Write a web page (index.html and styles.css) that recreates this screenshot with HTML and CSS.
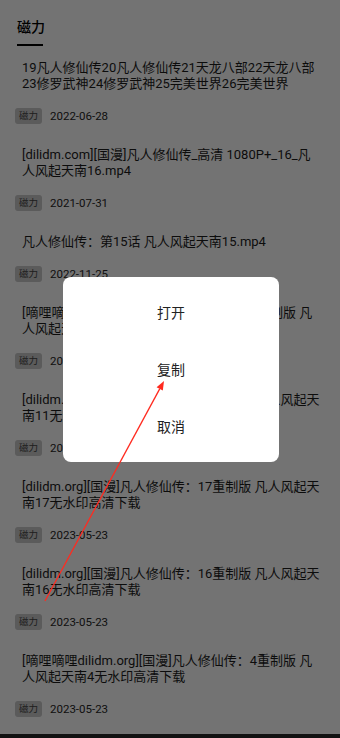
FILE: index.html
```html
<!DOCTYPE html>
<html lang="zh-CN">
<head>
<meta charset="utf-8">
<title>磁力</title>
<link rel="stylesheet" href="styles.css">
</head>
<body>
<div class="page">
  <header class="tabs">
    <div class="tab active">磁力</div>
  </header>
  <ul class="list">
    <li class="item">
      <p class="name">19凡人修仙传20凡人修仙传21天龙八部22天龙八部23修罗武神24修罗武神25完美世界26完美世界</p>
      <div class="meta"><span class="tag">磁力</span><span class="date">2022-06-28</span></div>
    </li>
    <li class="item">
      <p class="name">[dilidm.com][国漫]凡人修仙传_高清 1080P+_16_凡人风起天南16.mp4</p>
      <div class="meta"><span class="tag">磁力</span><span class="date">2021-07-31</span></div>
    </li>
    <li class="item">
      <p class="name">凡人修仙传：第15话 凡人风起天南15.mp4</p>
      <div class="meta"><span class="tag">磁力</span><span class="date">2022-11-25</span></div>
    </li>
    <li class="item">
      <p class="name">[嘀哩嘀哩dilidm.org][国漫]凡人修仙传：5重制版 凡人风起天南5无水印高清下载</p>
      <div class="meta"><span class="tag">磁力</span><span class="date">2023-05-23</span></div>
    </li>
    <li class="item">
      <p class="name">[dilidm.org][国漫]凡人修仙传：11重制版 凡人风起天南11无水印高清下载</p>
      <div class="meta"><span class="tag">磁力</span><span class="date">2023-05-23</span></div>
    </li>
    <li class="item">
      <p class="name">[dilidm.org][国漫]凡人修仙传：17重制版 凡人风起天南17无水印高清下载</p>
      <div class="meta"><span class="tag">磁力</span><span class="date">2023-05-23</span></div>
    </li>
    <li class="item">
      <p class="name">[dilidm.org][国漫]凡人修仙传：16重制版 凡人风起天南16无水印高清下载</p>
      <div class="meta"><span class="tag">磁力</span><span class="date">2023-05-23</span></div>
    </li>
    <li class="item">
      <p class="name">[嘀哩嘀哩dilidm.org][国漫]凡人修仙传：4重制版 凡人风起天南4无水印高清下载</p>
      <div class="meta"><span class="tag">磁力</span><span class="date">2023-05-23</span></div>
    </li>
  </ul>
</div>

<div class="overlay">
  <div class="dialog">
    <div class="option">打开</div>
    <div class="option">复制</div>
    <div class="option">取消</div>
  </div>
</div>

<svg class="arrow" width="340" height="738" viewBox="0 0 340 738" xmlns="http://www.w3.org/2000/svg">
  <line x1="45" y1="601" x2="159.7" y2="388.9" stroke="#ff2a1f" stroke-width="1.3"/>
  <polygon points="164,381 162.8,390.6 156.6,387.3" fill="#ff2a1f"/>
</svg>

<div class="navbar"></div>
</body>
</html>
```

FILE: styles.css
```css
* {
  box-sizing: border-box;
}

html, body {
  margin: 0;
  padding: 0;
  background: #ffffff;
}

body {
  font-family: Roboto, "Noto Sans CJK SC", "Noto Sans", sans-serif;
  color: #222;
  width: 340px;
  height: 738px;
  overflow: hidden;
}

.tabs {
  padding: 17px 0 0 17px;
}

.tab {
  display: inline-block;
  font-size: 14px;
  line-height: 20px;
  font-weight: 500;
  color: #000;
}

.tab.active::after {
  content: "";
  display: block;
  width: 26px;
  height: 2px;
  margin-top: 7px;
  background: #000;
}

.list {
  list-style: none;
  margin: 14px 0 0;
  padding: 0;
  display: flex;
  flex-direction: column;
  gap: 23.5px;
}

.item {
  display: flex;
  flex-direction: column;
  gap: 15.5px;
}

.name {
  margin: 0;
  padding: 0 18px 0 22px;
  font-size: 13px;
  line-height: 16px;
  color: #1c1c1c;
}

.meta {
  display: flex;
  align-items: center;
  padding-left: 15px;
  height: 16px;
}

.tag {
  display: inline-block;
  height: 16px;
  line-height: 16px;
  padding: 0 4px;
  font-size: 9.5px;
  color: #444;
  background: #c9c9c9;
  border-radius: 3px;
}

.date {
  margin-left: 8px;
  font-size: 11.5px;
  color: #262626;
}

.overlay {
  position: fixed;
  inset: 0;
  background: rgba(0, 0, 0, 0.55);
  display: flex;
  align-items: center;
  justify-content: center;
  padding-left: 2px;
}

.dialog {
  width: 216px;
  background: #ffffff;
  border-radius: 8px;
  padding: 7px 0;
}

.option {
  height: 57px;
  display: flex;
  align-items: center;
  justify-content: center;
  font-size: 14px;
  color: #222;
}

.arrow {
  position: fixed;
  left: 0;
  top: 0;
  pointer-events: none;
}

.navbar {
  position: fixed;
  left: 0;
  right: 0;
  bottom: 0;
  height: 4px;
  background: #121212;
}
```
